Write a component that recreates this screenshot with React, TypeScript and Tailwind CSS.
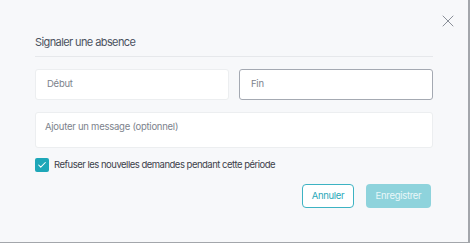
import { Check, X } from 'lucide-react'

export default function App() {
  return (
    <div
      className="relative w-[470px] h-[243px] bg-[#f7f8fa] border-r-2 border-b border-[#a3a6ab] px-[35px] pt-[33px]"
      style={{ fontFamily: 'Inter, "Noto Sans", sans-serif' }}
    >
      <button className="absolute right-[10px] top-[11px] text-[#8a8f98]">
        <X size={20} strokeWidth={1.2} />
      </button>

      <h2 className="text-[11px] leading-[18px] tracking-[-0.6px] text-[#4b5260]">Signaler une absence</h2>
      <div className="mt-[5px] h-px bg-[#e6e8eb]" />

      <div className="mt-[12px] grid grid-cols-2 gap-[10px]">
        <div className="h-[31px] rounded-[3px] border border-[#eceef0] bg-white px-[11px] flex items-center text-[9.5px] tracking-[-0.25px] text-[#7c828c]">
          Début
        </div>
        <div className="h-[31px] rounded-[3px] border border-[#a4a9b2] bg-white px-[11px] flex items-center text-[9.5px] tracking-[-0.25px] text-[#7c828c]">
          Fin
        </div>
      </div>

      <div className="mt-[12px] h-[36px] rounded-[3px] border border-[#eceef0] bg-white px-[9px] pt-[8px] text-[9.5px] leading-[12px] tracking-[-0.25px] text-[#7c828c]">
        Ajouter un message (optionnel)
      </div>

      <label className="mt-[10px] flex items-center gap-[5px]">
        <span className="w-[14px] h-[14px] rounded-[2px] bg-[#1ea7b8] flex items-center justify-center text-white">
          <Check size={10} strokeWidth={2.5} />
        </span>
        <span className="text-[9.5px] tracking-[-0.5px] text-[#3d424b]">
          Refuser les nouvelles demandes pendant cette période
        </span>
      </label>

      <div className="mt-[12px] flex justify-end gap-[12px] pr-[2px]">
        <button className="h-[24px] w-[52px] rounded-[4px] border border-[#3db3c3] bg-white text-[9.5px] tracking-[-0.3px] text-[#2aa8b9]">
          Annuler
        </button>
        <button className="h-[24px] w-[65px] rounded-[4px] bg-[#8ed3dc] text-[9.5px] tracking-[-0.3px] text-[#e9f7f9]">
          Enregistrer
        </button>
      </div>
    </div>
  )
}
